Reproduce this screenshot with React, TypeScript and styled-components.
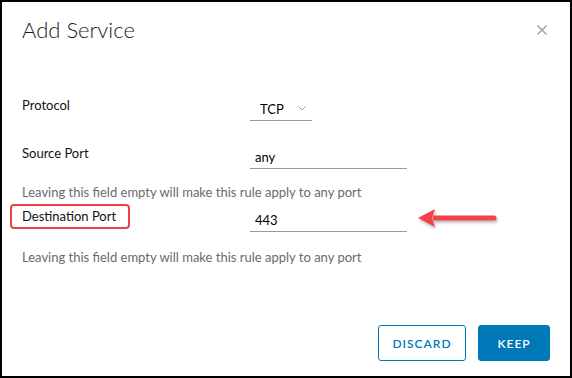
import React from "react";
import styled, { createGlobalStyle } from "styled-components";

const Global = createGlobalStyle`
  html, body {
    margin: 0;
    padding: 0;
    background: #fff;
  }
  * {
    box-sizing: border-box;
  }
`;

const Dialog = styled.div`
  position: relative;
  width: 572px;
  height: 378px;
  border: 2px solid #000;
  padding: 16px 20px 15px 20px;
  display: flex;
  flex-direction: column;
  font-family: Lato, "Open Sans", sans-serif;
  color: #313131;
`;

const Header = styled.div`
  display: flex;
  align-items: center;
  justify-content: space-between;
  height: 24px;
`;

const Title = styled.h1`
  margin: 0;
  font-size: 22px;
  line-height: 24px;
  font-weight: 300;
  color: #1a1a1a;
`;

const Close = styled.button`
  border: none;
  background: none;
  padding: 0;
  margin-right: 2px;
  width: 12px;
  height: 12px;
  display: flex;
  align-items: center;
  justify-content: center;
  cursor: pointer;
`;

const Row = styled.div<{ $mt: number }>`
  display: grid;
  grid-template-columns: 228px 1fr;
  margin-top: ${(p) => p.$mt}px;
  height: 24px;
`;

const Label = styled.span`
  position: relative;
  align-self: start;
  justify-self: start;
  font-size: 13px;
  line-height: 16px;
  color: #111;
`;

const Ring = styled.span`
  position: absolute;
  top: -4px;
  bottom: -5px;
  left: -12px;
  right: -14px;
  border: 2px solid #ee4148;
  border-radius: 4px;
`;

const Select = styled.div`
  width: 62px;
  height: 24px;
  display: flex;
  align-items: center;
  justify-content: space-between;
  padding: 0 6px 0 10px;
  border-bottom: 1px solid #9a9a9a;
  font-size: 13px;
  color: #000;
`;

const Input = styled.input`
  width: 157px;
  height: 24px;
  border: none;
  border-bottom: 1px solid #9a9a9a;
  padding: 0 0 0 5px;
  font-family: inherit;
  font-size: 13px;
  color: #000;
  outline: none;
  background: transparent;
`;

const Helper = styled.p<{ $mt: number }>`
  margin: ${(p) => p.$mt}px 0 0 0;
  font-size: 13px;
  line-height: 16px;
  color: #6a6a6a;
`;

const Footer = styled.div`
  margin-top: auto;
  display: flex;
  justify-content: flex-end;
  gap: 12px;
`;

const Button = styled.button<{ $primary?: boolean; $w: number }>`
  width: ${(p) => p.$w}px;
  height: 36px;
  border-radius: 3px;
  border: 1px solid #0079b8;
  background: ${(p) => (p.$primary ? "#0079b8" : "#fff")};
  color: ${(p) => (p.$primary ? "#fff" : "#0079b8")};
  font-family: Lato, "Open Sans", sans-serif;
  font-size: 12px;
  font-weight: 600;
  letter-spacing: 1px;
  text-transform: uppercase;
  padding: 0;
`;

const Arrow = styled.svg`
  position: absolute;
  left: 414px;
  top: 204px;
  overflow: visible;
`;

export default function App() {
  return (
    <>
      <Global />
      <Dialog>
        <Header>
          <Title>Add Service</Title>
          <Close aria-label="Close">
            <svg width="10" height="10" viewBox="0 0 10 10">
              <path d="M0.5 0.5 L9.5 9.5 M9.5 0.5 L0.5 9.5" stroke="#9a9a9a" strokeWidth="1.2" fill="none" />
            </svg>
          </Close>
        </Header>

        <Row $mt={55}>
          <Label>Protocol</Label>
          <Select>
            <span>TCP</span>
            <svg width="8" height="5" viewBox="0 0 8 5">
              <path d="M0.5 0.5 L4 4 L7.5 0.5" stroke="#a0a0a0" strokeWidth="1" fill="none" />
            </svg>
          </Select>
        </Row>

        <Row $mt={24}>
          <Label>Source Port</Label>
          <Input defaultValue="any" />
        </Row>
        <Helper $mt={15}>Leaving this field empty will make this rule apply to any port</Helper>

        <Row $mt={8}>
          <Label>
            Destination Port
            <Ring />
          </Label>
          <Input defaultValue="443" />
        </Row>
        <Helper $mt={17}>Leaving this field empty will make this rule apply to any port</Helper>

        <Footer>
          <Button $w={88}>Discard</Button>
          <Button $w={72} $primary>
            Keep
          </Button>
        </Footer>

        <Arrow width="84" height="24" viewBox="0 0 84 24">
          <defs>
            <filter id="sh" x="-20%" y="-50%" width="140%" height="200%">
              <feDropShadow dx="1" dy="2" stdDeviation="1.5" floodColor="#000" floodOpacity="0.3" />
            </filter>
          </defs>
          <g filter="url(#sh)">
            <path d="M17 9.5 L78 9.5 A2.5 2.5 0 0 1 78 14.5 L17 14.5 Z" fill="#f2434b" />
            <path d="M2 12 L19 3 L16 12 L19 21 Z" fill="#f2434b" />
          </g>
        </Arrow>
      </Dialog>
    </>
  );
}
